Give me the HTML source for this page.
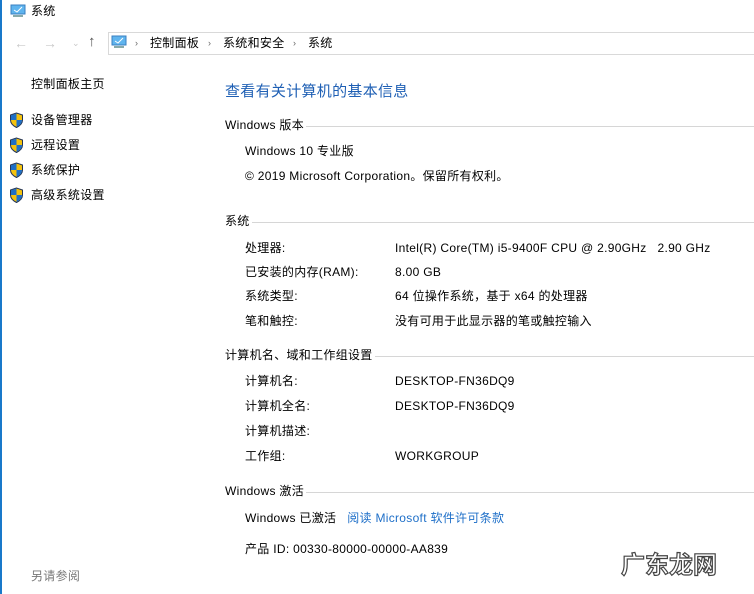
<!DOCTYPE html><html><head><meta charset="utf-8"><style>
body{margin:0;width:754px;height:594px;background:#fff;position:relative;overflow:hidden;font-family:"Liberation Sans","Microsoft YaHei","Noto Sans CJK SC",sans-serif;font-size:12px;letter-spacing:0.3px;color:#000}
.t{position:absolute;white-space:nowrap;line-height:16px}
.h{position:absolute;left:225px;right:0;height:16px;line-height:16px;display:flex;align-items:center}
.h span{white-space:nowrap;padding-right:2px}.h i{flex:1;border-top:1px solid #d6d6d6;margin-top:2px}
.sh{position:absolute;left:9px;width:15px;height:16px}
</style></head><body>
<div style="position:absolute;left:0;top:0;width:2px;height:594px;background:#1979ca"></div>
<svg style="position:absolute;left:10px;top:4px" width="16" height="14"><rect x="1" y="1" width="14" height="9" fill="#5fb4ee" stroke="#3a7fc0"/><path d="M4 6l3 2 5-5" stroke="#fff" fill="none"/><rect x="3" y="11" width="10" height="2" fill="#8aa"/></svg>
<div class="t" style="left:31px;top:3px">系统</div>
<div class="t" style="left:14px;top:35px;color:#c8c8c8;font-size:14px">←</div>
<div class="t" style="left:43px;top:35px;color:#c8c8c8;font-size:14px">→</div>
<div class="t" style="left:72px;top:35px;color:#c8c8c8;font-size:9px">⌄</div>
<div class="t" style="left:88px;top:34px;color:#555;font-size:15px">↑</div>
<div style="position:absolute;left:108px;top:32px;width:660px;height:21px;border:1px solid #d9d9d9"></div>
<svg style="position:absolute;left:111px;top:35px" width="16" height="14"><rect x="1" y="1" width="14" height="9" fill="#5fb4ee" stroke="#3a7fc0"/><path d="M4 6l3 2 5-5" stroke="#fff" fill="none"/><rect x="3" y="11" width="10" height="2" fill="#8aa"/></svg>
<div class="t" style="left:135px;top:35px;color:#666;font-size:9px">›</div>
<div class="t" style="left:150px;top:35px">控制面板</div>
<div class="t" style="left:208px;top:35px;color:#666;font-size:9px">›</div>
<div class="t" style="left:223px;top:35px">系统和安全</div>
<div class="t" style="left:293px;top:35px;color:#666;font-size:9px">›</div>
<div class="t" style="left:308px;top:35px">系统</div>
<div class="t" style="left:31px;top:76px">控制面板主页</div>
<svg class="sh" style="top:112px" viewBox="0 0 15 16"><path d="M7.5 1L1.5 3v5c0 4 3 6 6 7.5 3-1.5 6-3.5 6-7.5V3z" fill="#f4c20d" stroke="#235"/><path d="M7.5 1.5L2 3.3V8h5.5zM7.5 8v7c3-1.5 5.5-3.5 5.5-7z" fill="#1e6fc8"/></svg>
<div class="t" style="left:31px;top:112px">设备管理器</div>
<svg class="sh" style="top:137px" viewBox="0 0 15 16"><path d="M7.5 1L1.5 3v5c0 4 3 6 6 7.5 3-1.5 6-3.5 6-7.5V3z" fill="#f4c20d" stroke="#235"/><path d="M7.5 1.5L2 3.3V8h5.5zM7.5 8v7c3-1.5 5.5-3.5 5.5-7z" fill="#1e6fc8"/></svg>
<div class="t" style="left:31px;top:137px">远程设置</div>
<svg class="sh" style="top:162px" viewBox="0 0 15 16"><path d="M7.5 1L1.5 3v5c0 4 3 6 6 7.5 3-1.5 6-3.5 6-7.5V3z" fill="#f4c20d" stroke="#235"/><path d="M7.5 1.5L2 3.3V8h5.5zM7.5 8v7c3-1.5 5.5-3.5 5.5-7z" fill="#1e6fc8"/></svg>
<div class="t" style="left:31px;top:162px">系统保护</div>
<svg class="sh" style="top:187px" viewBox="0 0 15 16"><path d="M7.5 1L1.5 3v5c0 4 3 6 6 7.5 3-1.5 6-3.5 6-7.5V3z" fill="#f4c20d" stroke="#235"/><path d="M7.5 1.5L2 3.3V8h5.5zM7.5 8v7c3-1.5 5.5-3.5 5.5-7z" fill="#1e6fc8"/></svg>
<div class="t" style="left:31px;top:187px">高级系统设置</div>
<div class="t" style="left:31px;top:568px;color:#777">另请参阅</div>
<div class="t" style="left:225px;top:82px;font-size:15px;line-height:20px;color:#1e5fb4">查看有关计算机的基本信息</div>
<div class="h" style="top:117px"><span>Windows 版本</span><i></i></div>
<div class="t" style="left:245px;top:143px">Windows 10 专业版</div>
<div class="t" style="left:245px;top:168px">© 2019 Microsoft Corporation。保留所有权利。</div>
<div class="h" style="top:213px"><span>系统</span><i></i></div>
<div class="t" style="left:245px;top:240px">处理器:</div><div class="t" style="left:395px;top:240px">Intel(R) Core(TM) i5-9400F CPU @ 2.90GHz &nbsp; 2.90 GHz</div>
<div class="t" style="left:245px;top:264px">已安装的内存(RAM):</div><div class="t" style="left:395px;top:264px">8.00 GB</div>
<div class="t" style="left:245px;top:288px">系统类型:</div><div class="t" style="left:395px;top:288px">64 位操作系统，基于 x64 的处理器</div>
<div class="t" style="left:245px;top:313px">笔和触控:</div><div class="t" style="left:395px;top:313px">没有可用于此显示器的笔或触控输入</div>
<div class="h" style="top:347px"><span>计算机名、域和工作组设置</span><i></i></div>
<div class="t" style="left:245px;top:373px">计算机名:</div><div class="t" style="left:395px;top:373px">DESKTOP-FN36DQ9</div>
<div class="t" style="left:245px;top:398px">计算机全名:</div><div class="t" style="left:395px;top:398px">DESKTOP-FN36DQ9</div>
<div class="t" style="left:245px;top:423px">计算机描述:</div>
<div class="t" style="left:245px;top:448px">工作组:</div><div class="t" style="left:395px;top:448px">WORKGROUP</div>
<div class="h" style="top:483px"><span>Windows 激活</span><i></i></div>
<div class="t" style="left:245px;top:510px">Windows 已激活 &nbsp;&nbsp;<span style="color:#1e6fc8">阅读 Microsoft 软件许可条款</span></div>
<div class="t" style="left:245px;top:541px">产品 ID: 00330-80000-00000-AA839</div>
<div class="t" style="left:621px;top:551px;font-size:24px;line-height:30px;font-weight:bold;color:#fff;-webkit-text-stroke:1.2px #444;letter-spacing:0">广东龙网</div>
</body></html>
